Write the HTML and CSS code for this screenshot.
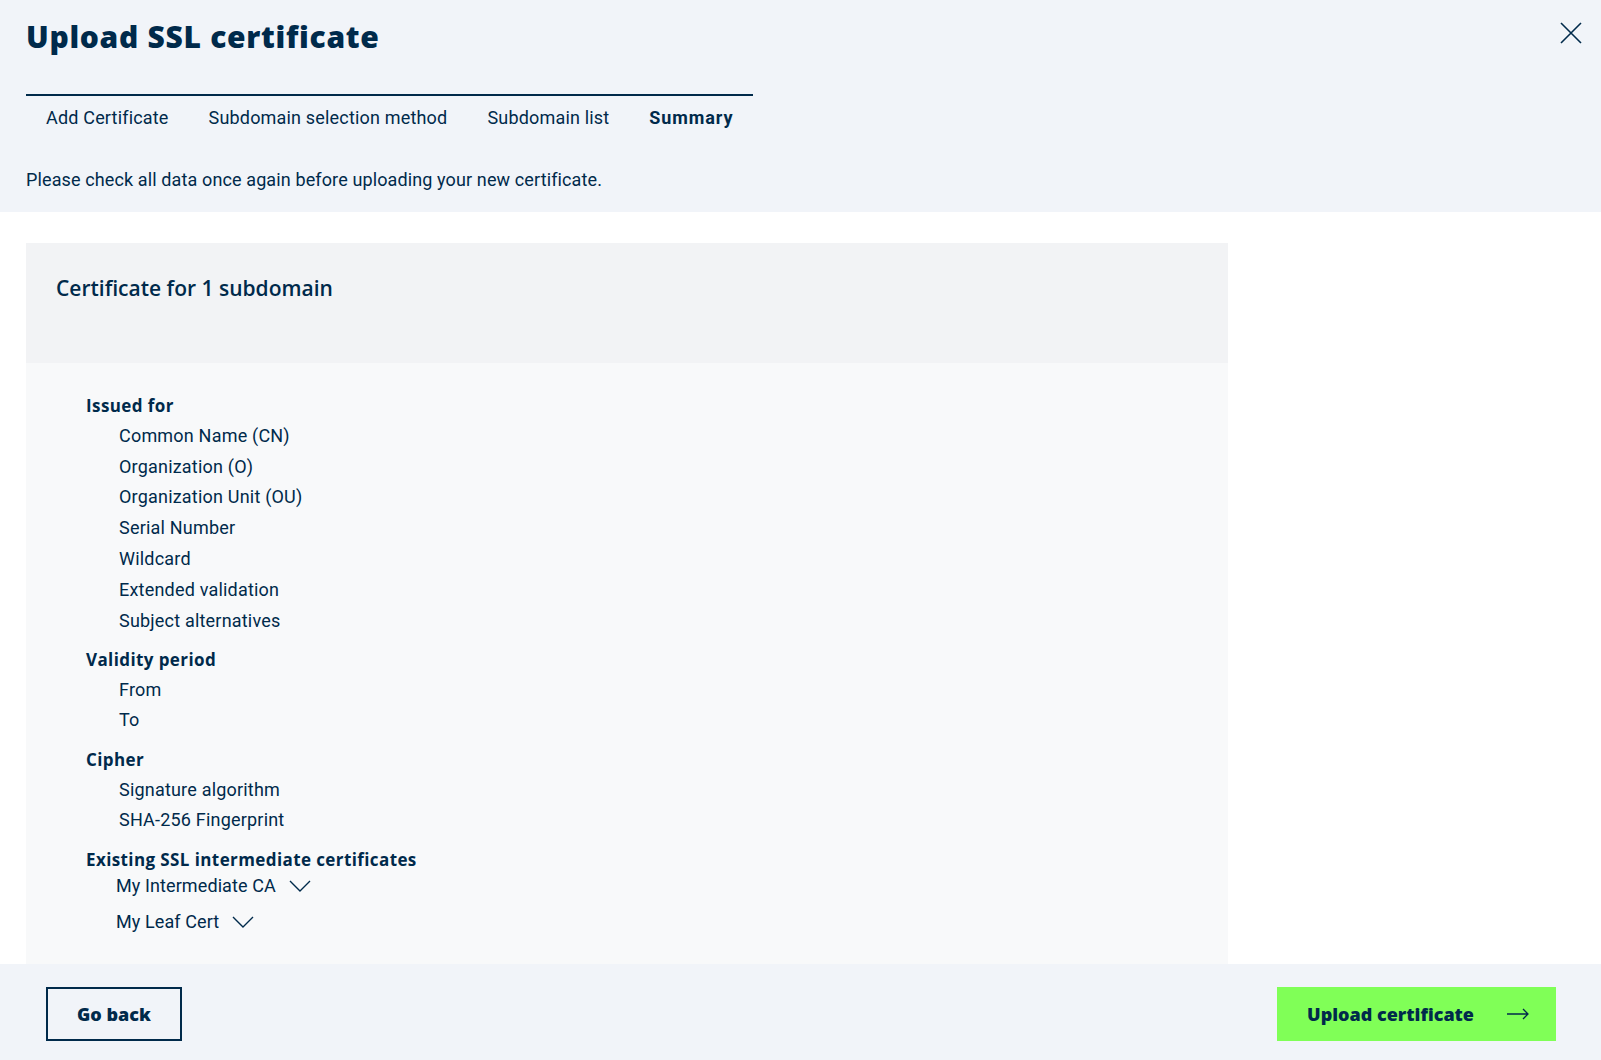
FILE: index.html
```html
<!DOCTYPE html>
<html lang="en">
  <head>
    <meta charset="UTF-8" />
    <meta name="viewport" content="width=device-width, initial-scale=1.0" />
    <title>Upload SSL certificate</title>
    <link rel="stylesheet" href="styles.css">
  </head>
  <body>
    <div class="page">
      <header class="top">
        <h1 class="title">Upload SSL certificate</h1>
        <button class="close" aria-label="Close">
          <svg width="22" height="22" viewBox="0 0 22 22">
            <path d="M1 1 L21 21 M21 1 L1 21" stroke="#002a4b" stroke-width="1.6" fill="none" />
          </svg>
        </button>
        <nav class="steps">
          <span class="step">Add Certificate</span>
          <span class="step">Subdomain selection method</span>
          <span class="step">Subdomain list</span>
          <span class="step active">Summary</span>
        </nav>
        <p class="intro">Please check all data once again before uploading your new certificate.</p>
      </header>

      <main class="content">
        <section class="card">
          <div class="card-head">
            <h2>Certificate for 1 subdomain</h2>
          </div>
          <div class="card-body">
            <div class="group">
              <h3>Issued for</h3>
              <ul>
                <li>Common Name (CN)</li>
                <li>Organization (O)</li>
                <li>Organization Unit (OU)</li>
                <li>Serial Number</li>
                <li>Wildcard</li>
                <li>Extended validation</li>
                <li>Subject alternatives</li>
              </ul>
            </div>
            <div class="group">
              <h3>Validity period</h3>
              <ul>
                <li>From</li>
                <li>To</li>
              </ul>
            </div>
            <div class="group">
              <h3>Cipher</h3>
              <ul>
                <li>Signature algorithm</li>
                <li>SHA-256 Fingerprint</li>
              </ul>
            </div>
            <div class="group">
              <h3>Existing SSL intermediate certificates</h3>
              <div class="chain">
                <button class="chain-item">
                  My Intermediate CA
                  <svg width="22" height="12" viewBox="0 0 22 12">
                    <path d="M1 1 L11 11 L21 1" stroke="#002a4b" stroke-width="1.4" fill="none" />
                  </svg>
                </button>
                <button class="chain-item">
                  My Leaf Cert
                  <svg width="22" height="12" viewBox="0 0 22 12">
                    <path d="M1 1 L11 11 L21 1" stroke="#002a4b" stroke-width="1.4" fill="none" />
                  </svg>
                </button>
              </div>
            </div>
          </div>
        </section>
      </main>

      <footer class="actions">
        <button class="btn btn-outline">Go back</button>
        <button class="btn btn-primary">
          Upload certificate
          <svg width="22" height="12" viewBox="0 0 22 12">
            <path d="M0 6 H21 M16 1 L21 6 L16 11" stroke="#002a4b" stroke-width="1.3" fill="none" />
          </svg>
        </button>
      </footer>
    </div>
  </body>
</html>
```

FILE: styles.css
```css
* {
  margin: 0;
  padding: 0;
  box-sizing: border-box;
}
body,
html {
  width: 100%;
  height: 100%;
  overflow: hidden;
  font-family: Roboto, "Liberation Sans", sans-serif;
  color: #002a4b;
  background: #ffffff;
}
button {
  font-family: inherit;
  color: inherit;
  background: none;
  border: none;
  cursor: pointer;
}
.page {
  display: flex;
  flex-direction: column;
  height: 100%;
}

/* header */
.top {
  position: relative;
  background: #f1f4f9;
  padding: 17px 26px 20px;
}
.title {
  font-family: "Open Sans", sans-serif;
  font-weight: 800;
  font-size: 30px;
  line-height: 39px;
  letter-spacing: 0.7px;
}
.close {
  position: absolute;
  top: 22px;
  right: 19px;
  width: 22px;
  height: 22px;
}
.close svg {
  display: block;
}
.steps {
  display: inline-flex;
  margin-top: 38px;
  border-top: 2px solid #002a4b;
  padding-top: 10px;
}
.step {
  padding: 0 20px;
  font-size: 18px;
  line-height: 24px;
  letter-spacing: 0.18px;
}
.step.active {
  font-weight: 700;
  letter-spacing: 0.9px;
}
.intro {
  margin-top: 38px;
  font-size: 18px;
  line-height: 24px;
  letter-spacing: 0.12px;
}

/* summary card */
.content {
  flex: 1;
  overflow: hidden;
  padding: 31px 26px 0;
}
.card {
  width: 1202px;
  height: 100%;
  display: flex;
  flex-direction: column;
}
.card-head {
  height: 120px;
  background: #f2f3f5;
  padding: 31px 30px 0;
}
.card-head h2 {
  font-family: "Open Sans", sans-serif;
  font-weight: 600;
  font-size: 21px;
  line-height: 28px;
}
.card-body {
  flex: 1;
  background: #f8f9fa;
  padding: 27px 60px 0;
}
.group h3 {
  font-family: "Open Sans", sans-serif;
  font-size: 17px;
  font-weight: 700;
  padding-top: 1px;
  line-height: 29.8px;
  letter-spacing: 0.4px;
}
.group + .group {
  margin-top: 7.5px;
}
.group ul {
  list-style: none;
  padding-left: 33px;
}
.group li {
  font-size: 18px;
  line-height: 30.8px;
  letter-spacing: 0.2px;
}
.chain {
  display: flex;
  flex-direction: column;
  align-items: flex-start;
  gap: 12px;
  padding-left: 30px;
}
.chain-item {
  display: flex;
  align-items: center;
  gap: 13px;
  font-size: 18px;
  line-height: 24px;
  letter-spacing: 0.1px;
}

/* footer actions */
.actions {
  height: 96px;
  background: #f1f4f9;
  display: flex;
  justify-content: space-between;
  align-items: flex-start;
  padding: 23px 45px 0 46px;
}
.btn {
  height: 54px;
  font-family: "Open Sans", sans-serif;
  font-weight: 800;
  font-size: 18px;
  display: flex;
  align-items: center;
}
.btn-outline {
  border: 2px solid #002a4b;
  padding: 0 29px;
}
.btn-primary {
  background: #80ff57;
  padding: 0 27px 0 30px;
  gap: 33px;
}
```
